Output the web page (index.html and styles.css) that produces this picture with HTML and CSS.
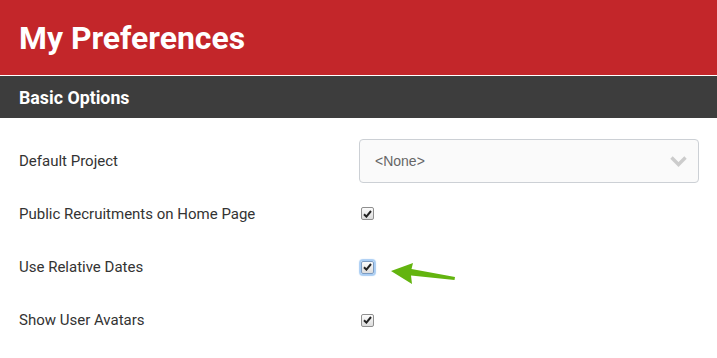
FILE: index.html
```html
<!DOCTYPE html>
<html lang="en">
<head>
    <meta charset="UTF-8">
    <meta name="viewport" content="width=device-width, initial-scale=1.0">
    <title>My Preferences</title>
    <link rel="stylesheet" href="styles.css">
</head>
<body>
    <div class="header">
        <h1>My Preferences</h1>
    </div>
    <div class="section-bar">Basic Options</div>
    <div class="form">
        <div class="row">
            <div class="label">Default Project</div>
            <div class="field">
                <div class="select">
                    <span>&lt;None&gt;</span>
                    <svg class="chevron" width="17" height="11" viewBox="0 0 17 11">
                        <path d="M1.5 1.5 L8.5 8.5 L15.5 1.5" fill="none" stroke="#cccccc" stroke-width="3.4"/>
                    </svg>
                </div>
            </div>
        </div>
        <div class="row">
            <div class="label">Public Recruitments on Home Page</div>
            <div class="field">
                <span class="check">
                    <svg width="9" height="8" viewBox="0 0 9 8"><path d="M1 4.2 L3.4 6.6 L8 1" fill="none" stroke="#222" stroke-width="2"/></svg>
                </span>
            </div>
        </div>
        <div class="row">
            <div class="label">Use Relative Dates</div>
            <div class="field">
                <span class="check focused">
                    <svg width="9" height="8" viewBox="0 0 9 8"><path d="M1 4.2 L3.4 6.6 L8 1" fill="none" stroke="#222" stroke-width="2"/></svg>
                </span>
                <svg class="arrow" width="70" height="28" viewBox="0 0 70 28">
                    <path d="M1 9 L23 1 L21.5 7 L65 15 L64.5 18 L21 13.5 L22 22 Z" fill="#63b40f"/>
                </svg>
            </div>
        </div>
        <div class="row">
            <div class="label">Show User Avatars</div>
            <div class="field">
                <span class="check">
                    <svg width="9" height="8" viewBox="0 0 9 8"><path d="M1 4.2 L3.4 6.6 L8 1" fill="none" stroke="#222" stroke-width="2"/></svg>
                </span>
            </div>
        </div>
    </div>
</body>
</html>
```

FILE: styles.css
```css
body
{
    margin: 0;
    font-family: Roboto, "Liberation Sans", sans-serif;
    background-color: #ffffff;
    color: #333333;
}
.header
{
    background-color: #c3262a;
    height: 75px;
    border-bottom: 1px solid #ffffff;
    padding: 0 19px;
    display: flex;
    align-items: center;
}
.header h1
{
    margin: 0;
    color: #ffffff;
    font-size: 31.9px;
    font-weight: 700;
}
.section-bar
{
    background-color: #3d3d3d;
    color: #ffffff;
    height: 42px;
    padding: 0 19px;
    display: flex;
    align-items: center;
    font-size: 17.8px;
    font-weight: 700;
}
.form
{
    padding: 21px 19px 0 19px;
    display: grid;
    grid-auto-rows: 43px;
    row-gap: 10.3px;
}
.row
{
    display: grid;
    grid-template-columns: 340px 1fr;
    align-items: center;
}
.label
{
    font-size: 15px;
    color: #333333;
}
.field
{
    position: relative;
    display: flex;
    align-items: center;
    height: 100%;
}
.select
{
    box-sizing: border-box;
    width: 340px;
    height: 44px;
    border: 1px solid #ccd0d5;
    border-radius: 4px;
    background-color: #fafafa;
    display: flex;
    align-items: center;
    justify-content: space-between;
    padding: 0 11px 0 15px;
    font-family: "Liberation Sans", Arial, sans-serif;
    font-size: 14px;
    color: #666666;
}
.check
{
    box-sizing: border-box;
    width: 13px;
    height: 13px;
    margin-left: 2px;
    border: 1px solid #8f8f8f;
    border-radius: 2px;
    background: linear-gradient(#fcfcfc, #dcdcdc);
    display: flex;
    align-items: center;
    justify-content: center;
}
.check.focused
{
    box-shadow: 0 0 1px 2px #a9cdf3;
    border-color: #7d9cc2;
}
.arrow
{
    position: absolute;
    left: 31px;
    top: 16px;
}
```
